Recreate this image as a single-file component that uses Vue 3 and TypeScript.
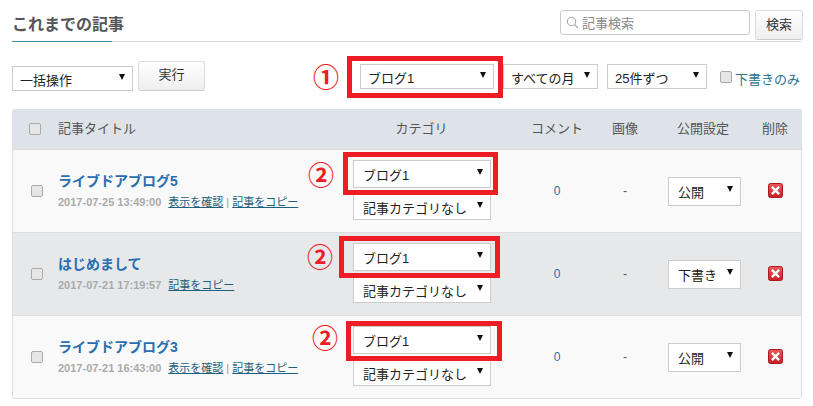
<script setup lang="ts">
interface Post {
  title: string
  date: string
  preview: boolean
  status: string
  draft: boolean
}

const posts: Post[] = [
  { title: 'ライブドアブログ5', date: '2017-07-25 13:49:00', preview: true, status: '公開', draft: false },
  { title: 'はじめまして', date: '2017-07-21 17:19:57', preview: false, status: '下書き', draft: true },
  { title: 'ライブドアブログ3', date: '2017-07-21 16:43:00', preview: true, status: '公開', draft: false },
]

const boxes = [
  { left: 347, top: 56, width: 156, height: 42 },
  { left: 343, top: 152, width: 155, height: 43 },
  { left: 339, top: 236, width: 161, height: 42 },
  { left: 346, top: 321, width: 156, height: 40 },
]

const marks = [
  { text: '①', left: 313, top: 65 },
  { text: '②', left: 308, top: 163 },
  { text: '②', left: 307, top: 245 },
  { text: '②', left: 312, top: 326 },
]

function px(o: Record<string, number>): Record<string, string> {
  const r: Record<string, string> = {}
  for (const k of Object.keys(o)) r[k] = o[k] + 'px'
  return r
}
</script>

<template>
  <div class="page">
    <div class="topbar">
      <h2 class="heading">これまでの記事</h2>
      <div class="search">
        <div class="search-input">
          <svg class="lens" viewBox="0 0 13 13" width="13" height="13">
            <circle cx="5.5" cy="5.5" r="4.2" fill="none" stroke="#aaa" stroke-width="1.1" />
            <path d="M8.6 8.6 L12 12" stroke="#aaa" stroke-width="1.3" fill="none" />
          </svg>
          <span>記事検索</span>
        </div>
        <button class="btn btn-search">検索</button>
      </div>
    </div>

    <div class="toolbar">
      <div class="bulk">
        <div class="sel sel-bulk">一括操作</div>
        <button class="btn btn-run">実行</button>
      </div>
      <div class="filters">
        <div class="sel sel-blog">ブログ1</div>
        <div class="sel sel-month">すべての月</div>
        <div class="sel sel-count">25件ずつ</div>
        <label class="draft-only"><input type="checkbox" class="cb" /><span class="draft-text">下書きのみ</span></label>
      </div>
    </div>

    <div class="table">
      <div class="row head">
        <div class="c-check"><input type="checkbox" class="cb" /></div>
        <div class="h-text">記事タイトル</div>
        <div class="center h-text h-cat">カテゴリ</div>
        <div class="center h-text h-shift">コメント</div>
        <div class="center h-text h-shift">画像</div>
        <div class="center h-text h-status">公開設定</div>
        <div class="center h-text">削除</div>
      </div>

      <div v-for="p in posts" :key="p.date" class="row body" :class="{ draft: p.draft }">
        <div class="c-check body-check"><input type="checkbox" class="cb" /></div>
        <div class="c-title">
          <a class="title">{{ p.title }}</a>
          <div class="meta">
            <span class="date">{{ p.date }}</span>
            <template v-if="p.preview"><a class="link">表示を確認</a><span class="sep">|</span></template>
            <a class="link">記事をコピー</a>
          </div>
        </div>
        <div class="c-cat">
          <div class="sel sel-cat">ブログ1</div>
          <div class="sel sel-cat2">記事カテゴリなし</div>
        </div>
        <div class="center count">0</div>
        <div class="center dash">-</div>
        <div class="c-status"><div class="sel sel-status">{{ p.status }}</div></div>
        <div class="c-del">
          <svg viewBox="0 0 15 15" width="15" height="15" class="del">
            <defs>
              <linearGradient id="delgrad" x1="0" y1="0" x2="0" y2="1">
                <stop offset="0" stop-color="#ec5a5a" />
                <stop offset="1" stop-color="#c81f25" />
              </linearGradient>
            </defs>
            <rect x="0.5" y="0.5" width="14" height="14" rx="2" fill="url(#delgrad)" stroke="#a81a1f" />
            <path d="M3.9 3.9 L11.1 11.1 M11.1 3.9 L3.9 11.1" stroke="#fff" stroke-width="2.4" fill="none" />
          </svg>
        </div>
      </div>
    </div>

    <div v-for="(b, i) in boxes" :key="'b' + i" class="red-box" :style="px(b)"></div>
    <span v-for="(m, i) in marks" :key="'m' + i" class="mark" :style="px({ left: m.left, top: m.top })">{{ m.text }}</span>
  </div>
</template>

<style>
html, body { margin: 0; background: #fff; }
</style>

<style scoped>
.page {
  position: relative;
  width: 813px;
  height: 406px;
  box-sizing: border-box;
  padding: 0 11px 0 12px;
  overflow: hidden;
  font-family: "Liberation Sans", "Noto Sans CJK JP", sans-serif;
  font-size: 13px;
  color: #333;
}
.topbar {
  display: flex;
  justify-content: space-between;
  height: 41px;
  border-bottom: 1px solid #ddd;
}
.heading {
  margin: 0 0 -1px;
  width: 100px;
  height: 41px;
  white-space: nowrap;
  font-size: 16px;
  line-height: 50px;
  font-weight: 700;
  color: #555;
  border-bottom: 1px solid #4c8b9c;
}
.search {
  display: flex;
  gap: 5px;
  padding-top: 10px;
  margin-right: -1px;
}
.search-input {
  box-sizing: border-box;
  width: 190px;
  height: 25px;
  display: flex;
  align-items: center;
  gap: 3px;
  padding-left: 5px;
  border: 1px solid #ccc;
  border-radius: 3px;
  color: #888;
}
.btn {
  box-sizing: border-box;
  font: inherit;
  color: #333;
  padding: 0;
  border: 1px solid #ddd;
  border-bottom-color: #ccc;
  border-radius: 3px;
  background: linear-gradient(#fff, #eee);
}
.btn-search { width: 48px; height: 30px; padding-bottom: 3px; }
.btn-run { width: 67px; height: 30px; padding-bottom: 6px; }
.toolbar {
  display: flex;
  justify-content: space-between;
  height: 67px;
}
.bulk {
  display: flex;
  align-items: flex-end;
  gap: 5px;
  padding-top: 19px;
  height: 30px;
}
.filters {
  display: flex;
  align-items: center;
  gap: 9px;
  height: 25px;
  padding-top: 22px;
  margin-right: 2px;
}
.sel {
  position: relative;
  box-sizing: border-box;
  border: 1px solid #ccc;
  background: #fff;
  color: #222;
  white-space: nowrap;
  display: flex;
  align-items: center;
  padding-left: 7px;
  padding-top: 1px;
}
.sel::after {
  content: "";
  position: absolute;
  right: 7px;
  top: calc(50% - 5px);
  border-left: 3.5px solid transparent;
  border-right: 3.5px solid transparent;
  border-top: 6px solid #111;
}
.sel-bulk { width: 121px; height: 25px; }
.sel-blog { width: 134px; height: 25px; }
.sel-month { width: 95px; height: 25px; }
.sel-count { width: 100px; height: 25px; }
.draft-only {
  display: flex;
  align-items: center;
  gap: 3px;
  margin-left: 4px;
  color: #2b7390;
  white-space: nowrap;
}
.draft-text { padding-top: 3px; }
.cb {
  appearance: none;
  margin: 0;
  box-sizing: border-box;
  width: 12px;
  height: 12px;
  background: #e6e6e6;
  border: 1px solid #aaa;
  border-radius: 2px;
  display: block;
}
.table {
  width: 790px;
  border: 1px solid #ddd;
  border-top: 0;
  border-radius: 3px;
  box-sizing: border-box;
}
.row {
  display: grid;
  grid-template-columns: 45px 282px 170px 94px 42px 104px 52px;
  align-items: center;
}
.head {
  height: 40px;
  grid-template-columns: 46px 281px 170px 94px 42px 104px 52px;
  background: #dde3e8;
  margin: 0 -1px;
  color: #555;
  border-radius: 3px 3px 0 0;
}
.h-text { padding-bottom: 4px; }
.center { text-align: center; }
.h-cat { padding-right: 5px; }
.h-shift { padding-left: 2px; }
.h-status { padding-left: 12px; }
.c-check { padding-left: 17px; }
.body-check { padding-left: 18px; }
.body {
  height: 83px;
  background: #f9f9f9;
  border-top: 1px solid #ddd;
  box-sizing: border-box;
}
.body.draft { background: #e6e8ea; }
.c-title {
  display: flex;
  flex-direction: column;
  gap: 4px;
  margin-top: -2px;
}
.title {
  font-size: 14px;
  font-weight: 700;
  color: #2a6db0;
  line-height: 20px;
}
.meta {
  font-size: 11px;
  line-height: 15px;
  white-space: nowrap;
}
.date { color: #aaa; font-weight: 700; margin-right: 7px; }
.link { color: #1d5f7d; text-decoration: underline; }
.sep { color: #999; margin: 0 3px; }
.c-cat {
  display: flex;
  flex-direction: column;
  gap: 6px;
  padding-left: 13px;
  margin-top: -2px;
}
.sel-cat { width: 138px; height: 28px; padding-left: 9px; }
.sel-cat2 { width: 138px; height: 26px; padding-left: 9px; }
.c-status { padding-left: 22px; }
.sel-status { width: 73px; height: 29px; padding-left: 9px; }
.count { color: #2a6db0; font-size: 12px; }
.dash { color: #555; font-size: 12px; }
.c-del { padding-left: 18px; margin-top: -2px; }
.del { display: block; }
.red-box {
  position: absolute;
  box-sizing: border-box;
  border: 5px solid #ee1c25;
}
.mark {
  position: absolute;
  width: 26px;
  height: 26px;
  line-height: 26px;
  font-size: 26px;
  text-align: center;
  font-weight: 700;
  color: #ee1c25;
}
</style>
